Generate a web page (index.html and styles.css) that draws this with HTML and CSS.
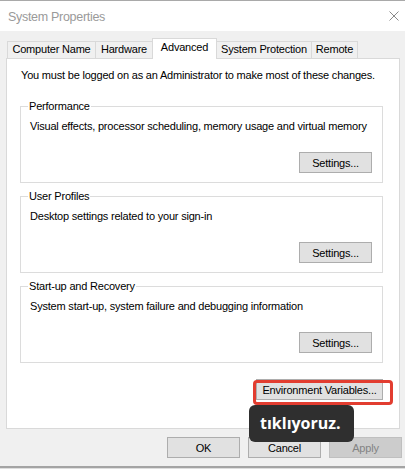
FILE: index.html
```html
<!DOCTYPE html>
<html lang="en">
<head>
<meta charset="utf-8">
<title>System Properties</title>
<link rel="stylesheet" href="styles.css">
</head>
<body>
<div class="window">
  <div class="titlebar">
    <span class="title">System Properties</span>
    <svg class="close" width="10" height="10" viewBox="0 0 10 10"><path d="M0.5 0.5 L9.5 9.5 M9.5 0.5 L0.5 9.5" stroke="#8a8a8a" stroke-width="1" fill="none"/></svg>
  </div>
  <div class="main">
    <div class="tabs">
      <div class="tab tab-computer">Computer Name</div>
      <div class="tab tab-hardware">Hardware</div>
      <div class="tab tab-advanced active">Advanced</div>
      <div class="tab tab-protection">System Protection</div>
      <div class="tab tab-remote">Remote</div>
    </div>
    <div class="panel">
      <p class="note">You must be logged on as an Administrator to make most of these changes.</p>
      <fieldset class="group">
        <legend>Performance</legend>
        <p class="desc">Visual effects, processor scheduling, memory usage and virtual memory</p>
        <div class="group-actions"><button class="btn">Settings...</button></div>
      </fieldset>
      <fieldset class="group">
        <legend>User Profiles</legend>
        <p class="desc">Desktop settings related to your sign-in</p>
        <div class="group-actions"><button class="btn">Settings...</button></div>
      </fieldset>
      <fieldset class="group">
        <legend>Start-up and Recovery</legend>
        <p class="desc">System start-up, system failure and debugging information</p>
        <div class="group-actions"><button class="btn">Settings...</button></div>
      </fieldset>
      <div class="env-row"><button class="btn btn-env">Environment Variables...</button></div>
    </div>
    <div class="footer">
      <button class="btn">OK</button>
      <button class="btn">Cancel</button>
      <button class="btn disabled">Apply</button>
    </div>
  </div>
  <div class="highlight"></div>
  <div class="badge">tıklıyoruz.</div>
</div>
</body>
</html>
```

FILE: styles.css
```css
* { box-sizing: border-box; }
html, body { margin: 0; padding: 0; }
body {
  background: #dedede;
  font-family: "Liberation Sans", Arial, sans-serif;
  font-size: 11px;
  letter-spacing: -0.2px;
  color: #000;
  width: 405px;
  height: 469px;
  overflow: hidden;
}
.window {
  position: relative;
  width: 405px;
  height: 468px;
  background: #f0f0f0;
  border-top: 1px solid #a9a9a9;
  border-bottom: 2px solid #a4a4a4;
}
.titlebar {
  height: 30px;
  background: #fff;
  display: flex;
  align-items: center;
  justify-content: space-between;
  padding: 0 6px 0 8px;
}
.title {
  font-size: 12.5px;
  color: #9a9a9a;
  letter-spacing: -0.3px;
  padding-top: 1px;
}
.close { display: block; }
.main {
  padding: 7px 3px 0 6px;
}
.tabs {
  display: flex;
  align-items: flex-end;
  height: 20px;
  padding-left: 1px;
}
.tab {
  height: 17px;
  border: 1px solid #d9d9d9;
  border-bottom: 0;
  margin-left: -1px;
  background: #f0f0f0;
  text-align: center;
  line-height: 15px;
  white-space: nowrap;
}
.tab:first-child { margin-left: 0; }
.tab.active {
  height: 21px;
  margin-bottom: -1px;
  background: #fff;
  position: relative;
  z-index: 1;
  line-height: 16px;
}
.tab-computer { width: 89px; }
.tab-hardware { width: 58px; }
.tab-advanced { width: 65px; }
.tab-protection { width: 96px; }
.tab-remote { width: 47px; }
.panel {
  width: 394px;
  height: 371px;
  background: #fff;
  border: 1px solid #d9d9d9;
  padding: 0 16px 0 13px;
}
.note {
  margin: 9px 0 0 1px;
  line-height: 15px;
  white-space: nowrap;
}
.group {
  margin: 16px 0 0;
  border: 1px solid #dcdcdc;
  padding: 6px 10px 9px 9px;
  min-width: 0;
}
.group + .group { margin-top: 6px; }
.group legend {
  padding: 0 1px;
  margin-left: -2px;
  line-height: 14px;
}
.desc {
  margin: 0;
  line-height: 15px;
  white-space: nowrap;
}
.group-actions {
  display: flex;
  justify-content: flex-end;
  margin-top: 18px;
}
.btn {
  font-family: "Liberation Sans", Arial, sans-serif;
  font-size: 11px;
  letter-spacing: -0.2px;
  color: #000;
  background: #e1e1e1;
  border: 1px solid #adadad;
  width: 73px;
  height: 21px;
  padding: 0;
  margin: 0;
  white-space: nowrap;
}
.btn.disabled {
  background: #cccccc;
  border-color: #bfbfbf;
  color: #838383;
}
.env-row {
  display: flex;
  justify-content: flex-end;
  margin-top: 16px;
}
.btn-env { width: 127px; }
.footer {
  display: flex;
  justify-content: flex-end;
  gap: 8px;
  margin-top: 8px;
}
.highlight {
  position: absolute;
  left: 253px;
  top: 379px;
  width: 140px;
  height: 25px;
  border: 3px solid #e23d30;
  border-radius: 4px;
}
.badge {
  position: absolute;
  left: 249px;
  top: 404px;
  width: 105px;
  height: 37px;
  background: #2f2f2f;
  border-radius: 6px;
  color: #fff;
  font-family: "Open Sans", sans-serif;
  font-weight: 700;
  font-size: 16px;
  letter-spacing: 0;
  line-height: 37px;
  padding-left: 11px;
}
```
